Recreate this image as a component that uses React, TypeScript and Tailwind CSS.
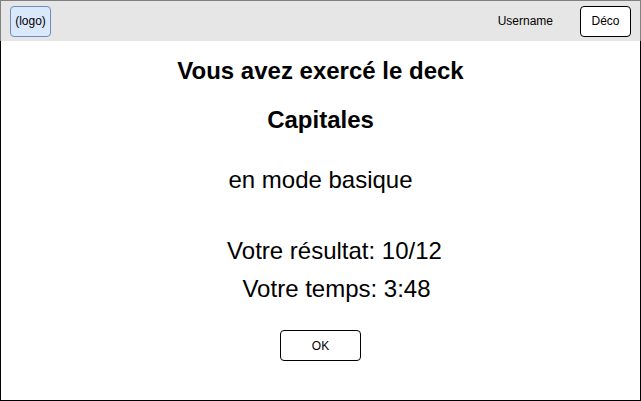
import React from "react";

const App = () => {
  return (
    <div className="w-[641px] h-[401px] bg-white font-['Liberation_Sans',Arial,sans-serif] text-black">
      <header className="flex items-center h-[41px] px-[10px] bg-[#e6e6e6] border-t border-x border-[#808080]">
        <button className="w-[41px] h-[31px] -ml-px rounded-[4px] border border-[#6c8ebf] bg-[#dae8fc] text-[12px]">
          (logo)
        </button>
        <span className="ml-auto mr-[27px] text-[12px]">Username</span>
        <button className="w-[51px] h-[31px] -mr-px rounded-[4px] border border-black bg-white text-[12px]">
          Déco
        </button>
      </header>
      <main className="flex flex-col items-center h-[360px] border-x border-b border-black">
        <h1 className="mt-[16px] text-[24px] leading-[28px] font-bold">
          Vous avez exercé le deck
        </h1>
        <h2 className="mt-[21px] text-[24px] leading-[28px] font-bold">
          Capitales
        </h2>
        <p className="mt-[32px] text-[24px] leading-[28px]">en mode basique</p>
        <p className="mt-[43px] pl-[28px] text-[24px] leading-[28px]">
          Votre résultat: 10/12
        </p>
        <p className="mt-[10px] pl-[32px] text-[24px] leading-[28px]">
          Votre temps: 3:48
        </p>
        <button className="mt-[27px] w-[81px] h-[31px] rounded-[4px] border border-black bg-white text-[12px]">
          OK
        </button>
      </main>
    </div>
  );
};

export default App;
